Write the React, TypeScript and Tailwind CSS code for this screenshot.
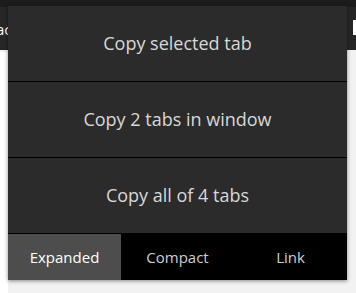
import React from 'react';

const font = { fontFamily: '"Open Sans", "Noto Sans", sans-serif' };

export default function App() {
  const actions = ['Copy selected tab', 'Copy 2 tabs in window', 'Copy all of 4 tabs'];
  const tabs = ['Expanded', 'Compact', 'Link'];

  return (
    <div className="relative w-[356px] h-[293px] overflow-hidden bg-[#f2f2f2]" style={font}>
      {/* browser page behind the popup */}
      <div className="flex flex-col">
        <div className="h-[7px] bg-[#1c1c1c]" />
        <div className="flex h-[43px] bg-[#262626] justify-between">
          <span className="ml-[-4px] mt-[15px] text-[15px] leading-none text-white">ac</span>
          <div className="mt-[13px] w-[3px] h-[15px] bg-white" />
        </div>
        <div className="flex h-[243px]">
          <div className="mt-[2px] w-[8px] bg-white" />
        </div>
      </div>

      {/* popup */}
      <div className="absolute left-[8px] top-[6px] w-[339px] bg-[#2b2b2b] shadow-[0_1px_4px_rgba(0,0,0,0.45)]">
        {actions.map((label) => (
          <button
            key={label}
            className="flex w-full h-[76px] items-center justify-center border-b border-black text-[18px] text-[#d8d8d8]"
          >
            {label}
          </button>
        ))}
        <div className="flex h-[46px] bg-black">
          {tabs.map((t, i) => (
            <button
              key={t}
              className={`flex-1 flex items-center justify-center text-[15px] ${i === 0 ? 'bg-[#4d4d4d] text-white' : 'text-[#cfcfcf]'}`}
            >
              {t}
            </button>
          ))}
        </div>
      </div>
    </div>
  );
}
